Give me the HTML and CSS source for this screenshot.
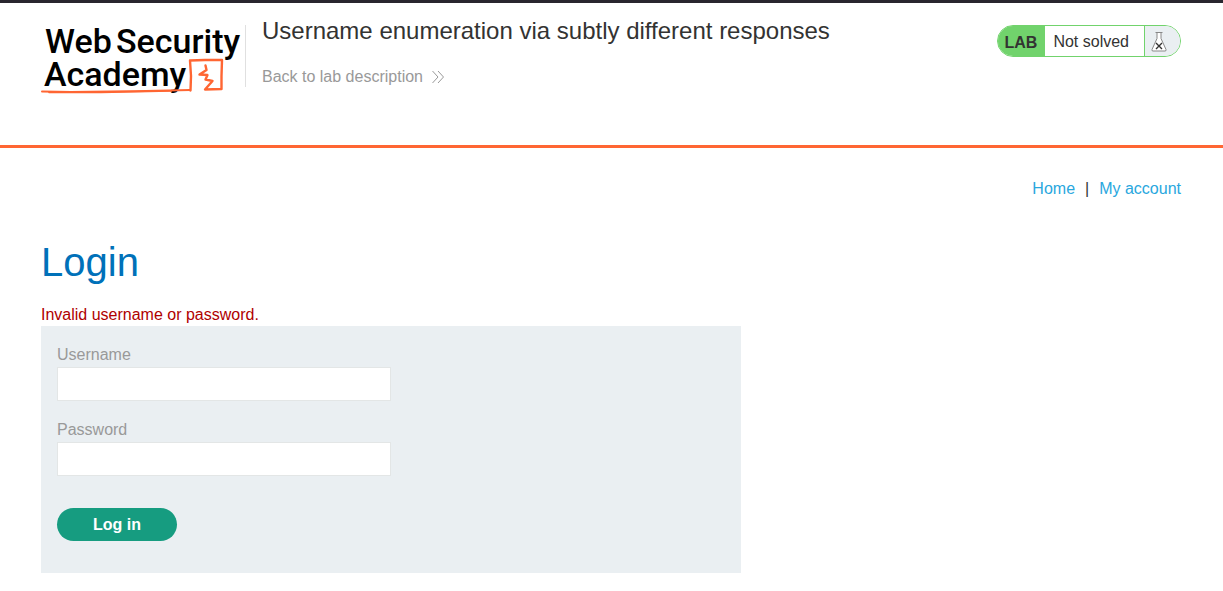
FILE: index.html
```html
<!DOCTYPE html>
<html lang="en">
<head>
<meta charset="utf-8">
<title>Username enumeration via subtly different responses</title>
<link rel="stylesheet" href="styles.css">
</head>
<body>
<header class="lab-header">
  <div class="container lab-header-row">
    <svg class="logo" width="204" height="76" viewBox="0 0 204 76" role="img" aria-label="Web Security Academy">
      <g class="logo-text">
        <text x="4" y="31">Web</text>
        <text x="75" y="31">Security</text>
        <text x="3" y="64">Academy</text>
      </g>
      <g fill="none" stroke="#ff6633" stroke-linecap="round" stroke-linejoin="round">
        <path stroke-width="2" d="M1 69.5 L30 70 L70 69.5 L105 69 L149 68"/>
        <path stroke-width="1.6" d="M8 70.5 L60 70.5 L130 69"/>
        <path stroke-width="2.4" d="M149.500 68.500 L150 54 L149 38.500 L164 38 L181 38 L180.500 54 L180.500 67 L164 67.500 L171.500 59 L164.500 57.500 L166.500 53 L158.500 52.500 L165.500 48 L164.500 43.500"/>
      </g>
    </svg>
    <div class="title-container">
      <h2 class="lab-title">Username enumeration via subtly different responses</h2>
      <a class="link-back" href="#">Back to lab description
        <svg width="12" height="14" viewBox="0 0 12 14" fill="none" stroke="#999" aria-hidden="true"><path d="M.5 1 6 7 .5 13M6 1l5.500 6L6 13"/></svg>
      </a>
    </div>
    <div class="lab-status">
      <span class="lab-tag">LAB</span>
      <span class="lab-state">Not solved</span>
      <span class="lab-icon">
        <svg width="16" height="21" viewBox="0 0 16 21" fill="none" aria-hidden="true">
          <path d="M4.500 1.500h7M6 2v5.500L1 18.500Q.5 20 2 20h12q1.500 0 1-1.500L10 7.500V2" fill="#fff" stroke="#888"/>
          <path d="M5 12l6 6M11 12l-6 6" stroke="#333332" stroke-width="1.400"/>
        </svg>
      </span>
    </div>
  </div>
</header>
<main class="container">
  <nav class="top-links">
    <a href="#">Home</a><span>|</span><a href="#">My account</a>
  </nav>
  <h1 class="page-title">Login</h1>
  <p class="warning">Invalid username or password.</p>
  <form class="login-form">
    <label for="username">Username</label>
    <input id="username" type="text" name="username">
    <label for="password">Password</label>
    <input id="password" type="password" name="password">
    <button type="submit">Log in</button>
  </form>
</main>
</body>
</html>
```
FILE: styles.css
```css
* {
  box-sizing: border-box;
}

body {
  margin: 0;
  background: #fff;
  color: #333332;
  font: 16px/24px Arial, "Liberation Sans", sans-serif;
}

a {
  text-decoration: none;
}

.container {
  padding: 0 42px 0 41px;
}

.lab-header {
  border-top: 3px solid #29262f;
  border-bottom: 3px solid #ff6633;
}

.lab-header-row {
  display: flex;
  align-items: flex-start;
  padding-top: 12px;
  padding-bottom: 47px;
}

.logo {
  flex: none;
  margin-top: 7px;
}

.logo-text {
  font-family: Roboto, sans-serif;
  font-size: 34px;
  font-weight: 500;
  fill: #000;
}

.title-container {
  position: relative;
  flex: 1;
  padding-left: 17px;
}

.title-container::before {
  content: "";
  position: absolute;
  top: 10px;
  left: 0;
  height: 62px;
  border-left: 1px solid #e0e0e0;
}

.lab-title {
  margin: 0 0 18px;
  font-size: 24px;
  line-height: 32px;
  font-weight: 400;
}

.link-back {
  display: inline-flex;
  align-items: center;
  gap: 9px;
  color: #999;
}

.lab-status {
  display: flex;
  flex: none;
  height: 32px;
  margin-top: 10px;
  overflow: hidden;
  border: 1px solid #71d36c;
  border-radius: 16px;
  line-height: 32px;
}

.lab-tag {
  padding: 0 8px 0 7px;
  background: #71d36c;
  font-weight: 700;
  line-height: 34px;
}

.lab-state {
  padding: 0 15px 0 8px;
}

.lab-icon {
  display: flex;
  align-items: center;
  width: 36px;
  height: 30px;
  padding-left: 6px;
  border-left: 1px solid #71d36c;
  background: #eaeff2;
}

.top-links {
  display: flex;
  justify-content: flex-end;
  gap: 10px;
  padding-top: 29px;
}

.top-links a {
  color: #29a7de;
}

.page-title {
  margin: 37px 0 18px;
  color: #0071b9;
  font-size: 40px;
  line-height: 48px;
  font-weight: 400;
}

.warning {
  margin: 0;
  color: #b00000;
  line-height: 22px;
}

.login-form {
  display: flex;
  flex-direction: column;
  align-items: flex-start;
  max-width: 700px;
  padding: 16px 16px 32px;
  background: #eaeff2;
}

.login-form label {
  color: #999;
  line-height: 25px;
}

.login-form input {
  width: 50%;
  height: 34px;
  margin-bottom: 16px;
  padding: 0 8px;
  border: 1px solid #e3e6e6;
  background: #fff;
  font: inherit;
}

.login-form button {
  min-width: 120px;
  height: 33px;
  margin-top: 16px;
  padding: 0 36px;
  border: 0;
  border-radius: 17px;
  background: #169c80;
  color: #fff;
  font: inherit;
  font-weight: 700;
}
```
